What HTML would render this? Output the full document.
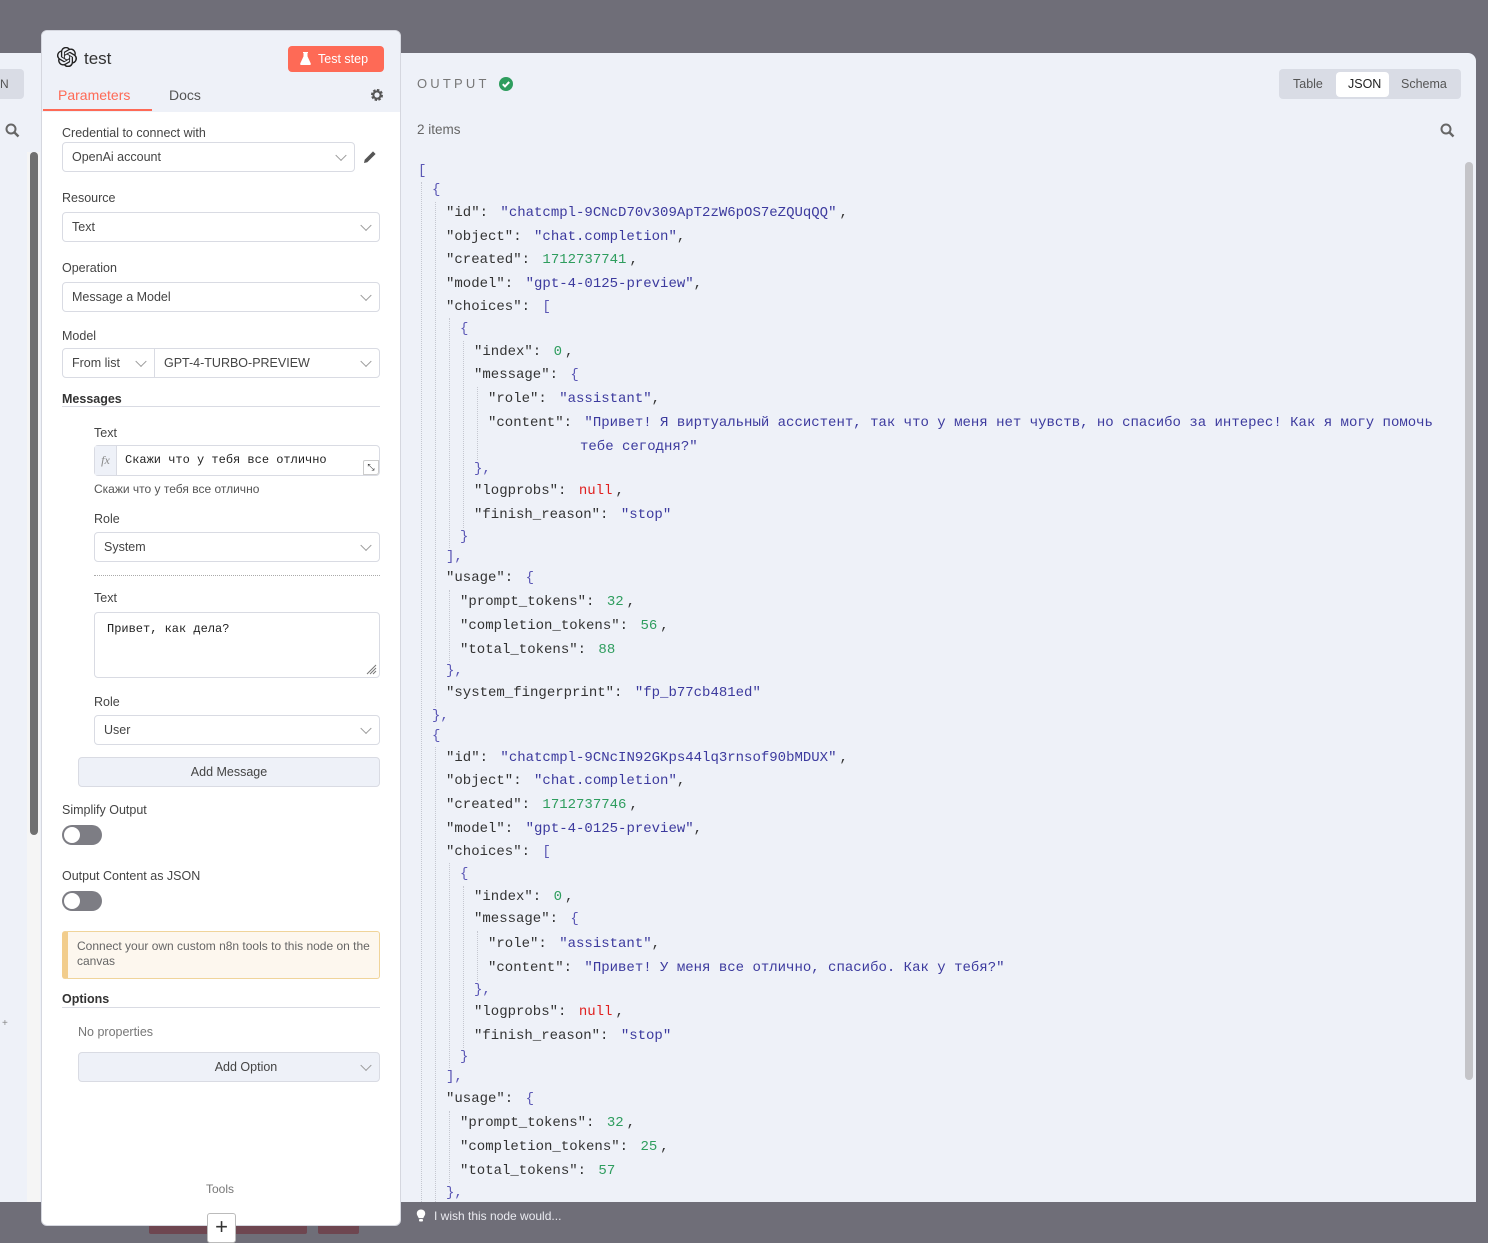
<!DOCTYPE html>
<html><head><meta charset="utf-8"><style>
*{box-sizing:border-box;margin:0;padding:0}
body{width:1488px;height:1239px;position:relative;overflow:hidden;background:#6f6e78;font-family:"Liberation Sans","Noto Sans CJK SC",sans-serif;color:#444}
.a{position:absolute}
.lbl{position:absolute;font-size:12.5px;color:#444;line-height:16px}
.sel{position:absolute;background:#fff;border:1px solid #d9dbe3;border-radius:4px;font-size:12.5px;color:#444;padding-left:9px;display:flex;align-items:center}
.chev{position:absolute;right:9px;top:50%;width:8px;height:8px;border-right:1px solid #999;border-bottom:1px solid #999;transform:translateY(-70%) rotate(45deg)}
.btn{position:absolute;background:#eef1f8;border:1px solid #d9dbe3;border-radius:4px;font-size:12.5px;color:#444;display:flex;align-items:center;justify-content:center}
.tog{position:absolute;width:40px;height:20px;border-radius:10px;background:#7d7d84}
.tog::after{content:"";position:absolute;left:2px;top:2px;width:16px;height:16px;border-radius:50%;background:#fff}
.j{position:absolute;font-family:"Liberation Mono","Noto Sans CJK SC",monospace;font-size:14px;line-height:22px;height:22px;color:#333;white-space:pre}
.s{color:#3c3a9e;margin-left:4px}
.n{color:#2e9d5e;margin-left:4px}
.nl{color:#e0201f;margin-left:4px}
.b{color:#5b57b5}
.c{margin-left:3px}
.g{position:absolute;border-left:1px dotted #c5c7d0;width:0}
</style></head><body>
<div class="a" style="left:0;top:53px;width:1476px;height:1149px;background:#eef1f8;border-top-right-radius:8px"></div>
<div class="a" style="left:0;top:69px;width:24px;height:30px;background:#d9dce5;border-radius:0 4px 4px 0;font-size:12px;color:#555;line-height:30px">N</div>
<svg class="a" style="left:5px;top:123px" width="15" height="15" viewBox="0 0 15 15"><circle cx="6" cy="6" r="4.5" fill="none" stroke="#666" stroke-width="2"/><path d="M9.5 9.5L13.5 13.5" stroke="#666" stroke-width="2.4"/></svg>
<div class="a" style="left:27px;top:152px;width:13px;height:1050px;background:#f5f5f5"></div>
<div class="a" style="left:30px;top:152px;width:8px;height:683px;background:#707070;border-radius:4px"></div>
<div class="a" style="left:2px;top:1018px;font-size:10px;color:#888">+</div>

<div class="a" style="left:417px;top:76px;font-size:13px;letter-spacing:3.2px;color:#777">OUTPUT</div>
<svg class="a" style="left:499px;top:77px" width="14" height="14" viewBox="0 0 14 14"><circle cx="7" cy="7" r="7" fill="#2e9d5e"/><path d="M3.8 7.2l2.2 2.2 4.2-4.4" fill="none" stroke="#fff" stroke-width="2"/></svg>
<div class="a" style="left:417px;top:122px;font-size:13.5px;color:#666">2 items</div>
<div class="a" style="left:1279px;top:69px;width:182px;height:30px;background:#d9dce5;border-radius:4px"></div>
<div class="a" style="left:1336px;top:72px;width:53px;height:25px;background:#fff;border-radius:4px"></div>
<div class="a" style="left:1293px;top:77px;font-size:12.5px;color:#555">Table</div>
<div class="a" style="left:1348px;top:77px;font-size:12.5px;color:#222">JSON</div>
<div class="a" style="left:1401px;top:77px;font-size:12.5px;color:#555">Schema</div>
<svg class="a" style="left:1440px;top:123px" width="15" height="15" viewBox="0 0 15 15"><circle cx="6" cy="6" r="4.5" fill="none" stroke="#666" stroke-width="2"/><path d="M9.5 9.5L13.5 13.5" stroke="#666" stroke-width="2.4"/></svg>
<div class="a" style="left:1465px;top:162px;width:8px;height:918px;background:#c4c4c8;border-radius:4px"></div>

<div class="g" style="left:421px;top:182px;height:1020px"></div>
<div class="g" style="left:435px;top:202px;height:505px"></div>
<div class="g" style="left:435px;top:747px;height:455px"></div>
<div class="g" style="left:449px;top:318px;height:230px"></div>
<div class="g" style="left:449px;top:590px;height:72px"></div>
<div class="g" style="left:463px;top:341px;height:187px"></div>
<div class="g" style="left:477px;top:387px;height:73px"></div>
<div class="g" style="left:449px;top:863px;height:205px"></div>
<div class="g" style="left:449px;top:1111px;height:72px"></div>
<div class="g" style="left:463px;top:886px;height:162px"></div>
<div class="g" style="left:477px;top:931px;height:50px"></div>

<div class="j b" style="left:418px;top:160px">[</div>
<div class="j b" style="left:432px;top:179px">{</div>
<div class="j" style="left:446px;top:202px">"id": <span class="s">"chatcmpl-9CNcD70v309ApT2zW6pOS7eZQUqQQ"</span><span class="c">,</span></div>
<div class="j" style="left:446px;top:226px">"object": <span class="s">"chat.completion"</span>,</div>
<div class="j" style="left:446px;top:249px">"created": <span class="n">1712737741</span><span class="c">,</span></div>
<div class="j" style="left:446px;top:273px">"model": <span class="s">"gpt-4-0125-preview"</span>,</div>
<div class="j" style="left:446px;top:296px">"choices": <span class="b" style="margin-left:4px">[</span></div>
<div class="j b" style="left:460px;top:318px">{</div>
<div class="j" style="left:474px;top:341px">"index": <span class="n">0</span><span class="c">,</span></div>
<div class="j" style="left:474px;top:364px">"message": <span class="b" style="margin-left:4px">{</span></div>
<div class="j" style="left:488px;top:388px">"role": <span class="s">"assistant"</span>,</div>
<div class="j" style="left:488px;top:412px">"content": <span class="s">"Привет! Я виртуальный ассистент, так что у меня нет чувств, но спасибо за интерес! Как я могу помочь</span></div>
<div class="j" style="left:580px;top:436px"><span class="s" style="margin-left:0">тебе сегодня?"</span></div>
<div class="j b" style="left:474px;top:458px">},</div>
<div class="j" style="left:474px;top:480px">"logprobs": <span class="nl">null</span><span class="c">,</span></div>
<div class="j" style="left:474px;top:504px">"finish_reason": <span class="s">"stop"</span></div>
<div class="j b" style="left:460px;top:526px">}</div>
<div class="j b" style="left:446px;top:546px">],</div>
<div class="j" style="left:446px;top:567px">"usage": <span class="b" style="margin-left:4px">{</span></div>
<div class="j" style="left:460px;top:591px">"prompt_tokens": <span class="n">32</span><span class="c">,</span></div>
<div class="j" style="left:460px;top:615px">"completion_tokens": <span class="n">56</span><span class="c">,</span></div>
<div class="j" style="left:460px;top:639px">"total_tokens": <span class="n">88</span></div>
<div class="j b" style="left:446px;top:660px">},</div>
<div class="j" style="left:446px;top:682px">"system_fingerprint": <span class="s">"fp_b77cb481ed"</span></div>
<div class="j b" style="left:432px;top:705px">},</div>
<div class="j b" style="left:432px;top:725px">{</div>
<div class="j" style="left:446px;top:747px">"id": <span class="s">"chatcmpl-9CNcIN92GKps44lq3rnsof90bMDUX"</span><span class="c">,</span></div>
<div class="j" style="left:446px;top:770px">"object": <span class="s">"chat.completion"</span>,</div>
<div class="j" style="left:446px;top:794px">"created": <span class="n">1712737746</span><span class="c">,</span></div>
<div class="j" style="left:446px;top:818px">"model": <span class="s">"gpt-4-0125-preview"</span>,</div>
<div class="j" style="left:446px;top:841px">"choices": <span class="b" style="margin-left:4px">[</span></div>
<div class="j b" style="left:460px;top:863px">{</div>
<div class="j" style="left:474px;top:886px">"index": <span class="n">0</span><span class="c">,</span></div>
<div class="j" style="left:474px;top:908px">"message": <span class="b" style="margin-left:4px">{</span></div>
<div class="j" style="left:488px;top:933px">"role": <span class="s">"assistant"</span>,</div>
<div class="j" style="left:488px;top:957px">"content": <span class="s">"Привет! У меня все отлично, спасибо. Как у тебя?"</span></div>
<div class="j b" style="left:474px;top:979px">},</div>
<div class="j" style="left:474px;top:1001px">"logprobs": <span class="nl">null</span><span class="c">,</span></div>
<div class="j" style="left:474px;top:1025px">"finish_reason": <span class="s">"stop"</span></div>
<div class="j b" style="left:460px;top:1046px">}</div>
<div class="j b" style="left:446px;top:1066px">],</div>
<div class="j" style="left:446px;top:1088px">"usage": <span class="b" style="margin-left:4px">{</span></div>
<div class="j" style="left:460px;top:1112px">"prompt_tokens": <span class="n">32</span><span class="c">,</span></div>
<div class="j" style="left:460px;top:1136px">"completion_tokens": <span class="n">25</span><span class="c">,</span></div>
<div class="j" style="left:460px;top:1160px">"total_tokens": <span class="n">57</span></div>
<div class="j b" style="left:446px;top:1182px;height:20px;overflow:hidden">},</div>
<div class="a" style="left:0;top:1202px;width:1488px;height:37px;background:#6f6e78"></div>
<svg class="a" style="left:416px;top:1209px" width="10" height="14" viewBox="0 0 10 14"><path d="M5 0.5C2.3 0.5 0.8 2.4 0.8 4.5c0 2 1.5 3 1.8 4.6h4.8c0.3-1.6 1.8-2.6 1.8-4.6C9.2 2.4 7.7 0.5 5 0.5z" fill="#fff"/><rect x="3" y="10" width="4" height="2.5" rx="1" fill="#fff"/></svg>
<div class="a" style="left:434px;top:1209px;font-size:12px;color:#eaeaf0">I wish this node would...</div>
<div class="a" style="left:149px;top:1222px;width:158px;height:12px;background:#6e4650;border-radius:2px"></div>
<div class="a" style="left:318px;top:1222px;width:41px;height:12px;background:#6e4650;border-radius:2px"></div>

<div class="a" style="left:41px;top:30px;width:360px;height:1196px;background:#fff;border:1px solid #d5d7df;border-radius:6px;overflow:hidden">
  <div class="a" style="left:0;top:0;width:360px;height:81px;background:#eef1f8"></div>
</div>
<svg class="a" style="left:57px;top:47px" width="20" height="20" viewBox="0 0 24 24"><path fill="#222" d="M22.3 9.8a6 6 0 0 0-.5-4.9 6 6 0 0 0-6.5-2.9A6 6 0 0 0 4.9 4.2a6 6 0 0 0-4 2.9 6 6 0 0 0 .7 7.1 6 6 0 0 0 .5 4.9 6 6 0 0 0 6.5 2.9A6 6 0 0 0 19.1 19.8a6 6 0 0 0 4-2.9 6 6 0 0 0-.8-7.1zM13.3 22.4a4.5 4.5 0 0 1-2.9-1l.1-.1 4.8-2.8a.8.8 0 0 0 .4-.7v-6.7l2 1.2v5.6a4.5 4.5 0 0 1-4.4 4.5zM3.6 18.3a4.5 4.5 0 0 1-.5-3l.1.1 4.8 2.8a.8.8 0 0 0 .8 0l5.8-3.4v2.3l-4.9 2.8a4.5 4.5 0 0 1-6.1-1.6zM2.3 7.9a4.5 4.5 0 0 1 2.4-2v5.7a.8.8 0 0 0 .4.7l5.8 3.4-2 1.2-4.8-2.8a4.5 4.5 0 0 1-1.8-6.2zm16.6 3.9-5.8-3.4 2-1.2 4.8 2.8a4.5 4.5 0 0 1-.7 8.1v-5.6a.8.8 0 0 0-.3-.7zm2-3-.1-.1-4.8-2.8a.8.8 0 0 0-.8 0L9.4 9.2V6.9l4.9-2.8a4.5 4.5 0 0 1 6.6 4.7zM8.3 12.9l-2-1.2V6.1a4.5 4.5 0 0 1 7.4-3.5l-.1.1-4.8 2.8a.8.8 0 0 0-.4.7zm1.1-2.4L12 9l2.6 1.5v3L12 15l-2.6-1.5z"/></svg>
<div class="a" style="left:84px;top:49px;font-size:17px;color:#333">test</div>
<div class="a" style="left:288px;top:46px;width:96px;height:26px;background:#fe6a56;border-radius:4px;color:#fff;font-size:12.5px;line-height:26px;padding-left:30px">Test step</div>
<svg class="a" style="left:300px;top:52px" width="11" height="13" viewBox="0 0 11 13"><path d="M3 0.5h5M4 0.5v4L0.8 11.5c-.3.7.1 1.2.8 1.2h7.8c.7 0 1.1-.5.8-1.2L7 4.5v-4" fill="#fff" stroke="#fff" stroke-width="1"/></svg>
<div class="a" style="left:58px;top:87px;font-size:14px;color:#fe6a56">Parameters</div>
<div class="a" style="left:43px;top:109px;width:109px;height:2px;background:#fe6a56"></div>
<div class="a" style="left:169px;top:87px;font-size:14px;color:#555">Docs</div>
<svg class="a" style="left:370px;top:88px" width="14" height="14" viewBox="0 0 14 14"><circle cx="7" cy="7" r="4.5" fill="none" stroke="#555" stroke-width="3" stroke-dasharray="2.2 1.3"/><circle cx="7" cy="7" r="3.6" fill="none" stroke="#555" stroke-width="2"/></svg>

<div class="lbl" style="left:62px;top:125px">Credential to connect with</div>
<div class="sel" style="left:62px;top:142px;width:293px;height:30px">OpenAi account<span class="chev"></span></div>
<svg class="a" style="left:363px;top:150px" width="14" height="14" viewBox="0 0 14 14"><path d="M1 13l.7-3.3L10 1.4l2.6 2.6-8.3 8.3z" fill="#555"/></svg>
<div class="lbl" style="left:62px;top:190px">Resource</div>
<div class="sel" style="left:62px;top:212px;width:318px;height:30px">Text<span class="chev"></span></div>
<div class="lbl" style="left:62px;top:260px">Operation</div>
<div class="sel" style="left:62px;top:282px;width:318px;height:30px">Message a Model<span class="chev"></span></div>
<div class="lbl" style="left:62px;top:328px">Model</div>
<div class="sel" style="left:62px;top:348px;width:93px;height:30px;border-radius:4px 0 0 4px">From list<span class="chev"></span></div>
<div class="sel" style="left:154px;top:348px;width:226px;height:30px;border-radius:0 4px 4px 0">GPT-4-TURBO-PREVIEW<span class="chev"></span></div>
<div class="lbl" style="left:62px;top:391px;color:#333;font-weight:600">Messages</div>
<div class="a" style="left:62px;top:406px;width:318px;height:1px;background:#d9dbe3"></div>
<div class="lbl" style="left:94px;top:425px">Text</div>
<div class="a" style="left:94px;top:445px;width:286px;height:31px;background:#fff;border:1px solid #d9dbe3;border-radius:4px"></div>
<div class="a" style="left:95px;top:446px;width:22px;height:29px;background:#eef1f8;border-right:1px solid #d9dbe3;font-family:'Liberation Serif',serif;font-style:italic;color:#888;font-size:12px;line-height:29px;text-align:center">fx</div>
<div class="a" style="left:125px;top:453px;font-family:'Liberation Mono',monospace;font-size:12px;color:#222">Скажи что у тебя все отлично</div>
<div class="a" style="left:363px;top:460px;width:16px;height:15px;border:1px solid #ccc;border-radius:2px 0 3px 0;font-size:9px;text-align:center;line-height:13px;color:#333;background:#fff">⤡</div>
<div class="lbl" style="left:94px;top:481px;font-size:12px;color:#555">Скажи что у тебя все отлично</div>
<div class="lbl" style="left:94px;top:511px">Role</div>
<div class="sel" style="left:94px;top:532px;width:286px;height:30px">System<span class="chev"></span></div>
<div class="a" style="left:94px;top:575px;width:286px;border-top:1px dotted #aaa"></div>
<div class="lbl" style="left:94px;top:590px">Text</div>
<div class="a" style="left:94px;top:612px;width:286px;height:66px;background:#fff;border:1px solid #d9dbe3;border-radius:4px"></div>
<div class="a" style="left:107px;top:622px;font-family:'Liberation Mono',monospace;font-size:12px;color:#222">Привет, как дела?</div>
<svg class="a" style="left:366px;top:664px" width="11" height="11" viewBox="0 0 11 11"><path d="M10 1L1 10M10 4L4 10M10 7L7 10" stroke="#777" stroke-width="1"/></svg>
<div class="lbl" style="left:94px;top:694px">Role</div>
<div class="sel" style="left:94px;top:715px;width:286px;height:30px">User<span class="chev"></span></div>
<div class="btn" style="left:78px;top:757px;width:302px;height:30px">Add Message</div>
<div class="lbl" style="left:62px;top:802px">Simplify Output</div>
<div class="tog" style="left:62px;top:825px"></div>
<div class="lbl" style="left:62px;top:868px">Output Content as JSON</div>
<div class="tog" style="left:62px;top:891px"></div>
<div class="a" style="left:62px;top:931px;width:318px;height:48px;background:#fdf7ee;border:1px solid #f0d49a;border-left:6px solid #f2cd8c;border-radius:3px;font-size:12px;color:#666;padding:7px 0 0 9px;line-height:15px">Connect your own custom n8n tools to this node on the canvas</div>
<div class="lbl" style="left:62px;top:991px;color:#333;font-weight:600">Options</div>
<div class="a" style="left:62px;top:1007px;width:318px;height:1px;background:#d9dbe3"></div>
<div class="lbl" style="left:78px;top:1024px;color:#777">No properties</div>
<div class="btn" style="left:78px;top:1052px;width:302px;height:30px;padding-left:34px">Add Option<span class="chev"></span></div>
<div class="a" style="left:206px;top:1182px;font-size:12px;color:#777">Tools</div>
<div class="a" style="left:207px;top:1213px;width:29px;height:30px;background:#fff;border:1px solid #bbb;border-radius:3px;font-size:22px;line-height:26px;text-align:center;color:#333">+</div>
</body></html>
